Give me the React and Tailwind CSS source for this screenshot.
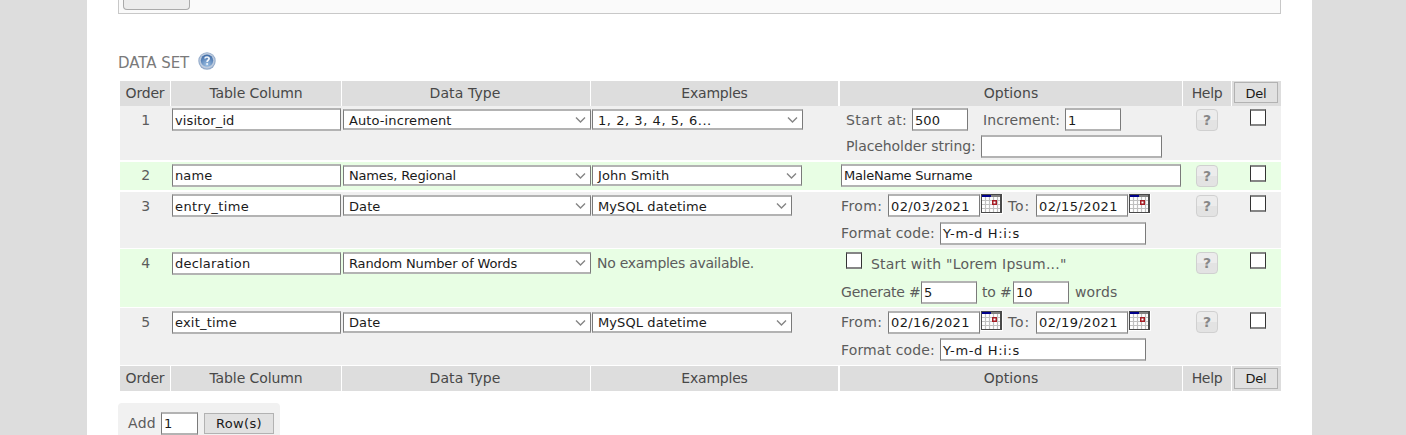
import React from "react";

function Field({ value = "", tracking = "tracking-[0.1px]", leading = "leading-[20px]", className = "" }) {
  return (
    <div className={`h-[23px] shrink-0 border-x border-y-2 border-x-[#7a7a7a] border-y-[#b3b3b3] bg-white pl-[2px] text-[13px] whitespace-nowrap text-[#1a1a1a] ${leading} ${tracking} ${className}`}>
      {value}
    </div>
  );
}

function Select({ value, tracking = "tracking-[0.1px]", shift = "top-0", className = "" }) {
  return (
    <div className={`flex shrink-0 items-center justify-between border-x border-y-2 border-x-[#7a7a7a] border-y-[#b3b3b3] bg-white pr-[4px] pl-[5px] text-[13px] leading-[17px] whitespace-nowrap text-[#1a1a1a] ${tracking} ${className}`}>
      <span className={`relative ${shift}`}>{value}</span>
      <svg width="11" height="8" viewBox="0 0 11 8" fill="none" stroke="#858585" strokeWidth="1.4">
        <path d="M1 1.5L5.5 6L10 1.5" />
      </svg>
    </div>
  );
}

function Label({ children, leading = "leading-[23px]", className = "" }) {
  return <span className={`h-[23px] shrink-0 whitespace-nowrap ${leading} ${className}`}>{children}</span>;
}

function Check({ className = "" }) {
  return <div className={`h-[17px] w-[16px] shrink-0 border-x border-y-2 border-x-[#333] border-y-[#858585] bg-white ${className}`} />;
}

function Calendar() {
  return (
    <svg className="ml-[1px] shrink-0" width="22" height="20" viewBox="0 0 22 20">
      <rect width="22" height="20" fill="#fff" />
      <rect width="21" height="19" fill="#4a4a4a" />
      <rect x="1" y="1" width="18" height="2" fill="#808080" />
      <rect x="1" y="1" width="9" height="2" fill="#00008b" />
      <rect x="1" y="3" width="18" height="15" fill="#fff" />
      <path d="M4.5 3v15M8.5 3v15M12.5 3v15M16.5 3v15M1 6.5h18M1 10.5h18M1 14.5h18" stroke="#c0c0c0" strokeWidth="1.2" />
      <rect x="11" y="6" width="5" height="5" fill="#a51c24" />
      <rect x="12.5" y="7.5" width="2" height="2" fill="#fff" />
    </svg>
  );
}

function HelpButton({ className = "" }) {
  return (
    <div className={`h-[22px] w-[22px] rounded-[4px] border border-[#d0d0d0] bg-linear-to-b from-[#ececec] from-50% to-[#e3e3e3] to-50% text-center text-[14px] leading-[20px] font-bold text-[#888] ${className}`}>
      ?
    </div>
  );
}

function Button({ children, className = "" }) {
  return (
    <div className={`h-[21px] border border-[#b2b2b2] bg-[#e1e1e1] text-center text-[13px] text-[#1a1a1a] ${className}`}>
      {children}
    </div>
  );
}

const columns = [
  ["Order", "w-[50px]"],
  ["Table Column", "w-[170px] tracking-[-0.1px]"],
  ["Data Type", "w-[248px] tracking-[0.1px] pr-[2px]"],
  ["Examples", "w-[247px] mr-[1px]"],
  ["Options", "w-[342px] tracking-[0.1px]"],
  ["Help", "w-[48px] tracking-[-0.3px]"],
];

function HeaderRow({ buttonClass }) {
  return (
    <div className="flex h-[25px] gap-px text-center leading-[24px] text-[#484848]">
      {columns.map(([label, width]) => (
        <div key={label} className={`shrink-0 bg-[#ddd] ${width}`}>{label}</div>
      ))}
      <div className="w-[49px] shrink-0 bg-[#ddd]">
        <Button className={`ml-[2px] w-[44px] ${buttonClass}`}>Del</Button>
      </div>
    </div>
  );
}

function Row({ order, name, nameTracking, nameLeading, type, typeTracking, typeShift, selectClass = "mt-[1px] h-[21px]", example, exampleTracking, exampleClass, rowClass, orderLeading = "leading-[24px]", checkClass = "mt-[1px]", helpClass = "mt-[1px]", children }) {
  return (
    <div className={`flex ${rowClass}`}>
      <div className={`w-[51px] shrink-0 text-center ${orderLeading}`}>{order}</div>
      <div className="w-[171px] shrink-0 pl-[1px]">
        <Field value={name} tracking={nameTracking} leading={nameLeading} className="w-[169px]" />
      </div>
      <div className="w-[249px] shrink-0 pl-[1px]">
        <Select value={type} tracking={typeTracking} shift={typeShift} className={`w-[248px] ${selectClass}`} />
      </div>
      <div className="w-[249px] shrink-0 pl-[1px]">
        {example ? (
          <Select value={example} tracking={exampleTracking} shift={typeShift} className={`${selectClass} ${exampleClass}`} />
        ) : (
          <Label className="block pl-[5px] tracking-[-0.28px]">No examples available.</Label>
        )}
      </div>
      <div className="w-[343px] shrink-0 pl-[1px]">{children}</div>
      <div className="w-[49px] shrink-0 pl-[13px]">
        <HelpButton className={helpClass} />
      </div>
      <div className="w-[49px] shrink-0 pl-[18px]">
        <Check className={checkClass} />
      </div>
    </div>
  );
}

function DateOptions({ from, to, dateLeading, labelLeading, codeLeading, lineClass }) {
  return (
    <>
      <div className="flex">
        <Label leading={labelLeading} className="w-[47px] tracking-[0.4px]">From:</Label>
        <Field value={from} tracking="tracking-[0.4px]" leading={dateLeading} className="w-[92px]" />
        <Calendar />
        <Label leading={labelLeading} className="ml-[5px] w-[28px] tracking-[0.9px]">To:</Label>
        <Field value={to} tracking="tracking-[0.4px]" leading={dateLeading} className="w-[92px]" />
        <Calendar />
      </div>
      <div className={`flex ${lineClass}`}>
        <Label leading={codeLeading} className="w-[99px] tracking-[0.13px]">Format code:</Label>
        <Field value="Y-m-d H:i:s" leading={codeLeading ? "leading-[22px]" : undefined} tracking="tracking-[0.65px]" className="w-[206px]" />
      </div>
    </>
  );
}

function HelpIcon() {
  return (
    <svg className="mt-[8px] ml-[9px]" width="18" height="18" viewBox="0 0 18 18">
      <defs>
        <radialGradient id="ball" cx="50%" cy="85%" r="80%">
          <stop offset="0" stopColor="#9cc0e4" />
          <stop offset="1" stopColor="#416da8" />
        </radialGradient>
      </defs>
      <circle cx="9" cy="9" r="8.7" fill="#93abcb" />
      <circle cx="9" cy="8.8" r="7.7" fill="#bccadd" />
      <circle cx="9" cy="8.6" r="6.2" fill="url(#ball)" />
      <path d="M6.9 6.5C7.1 4.5 11.1 4.4 11.1 6.8C11.1 8.3 9.1 8.3 9.1 9.9" fill="none" stroke="#f0f5fb" strokeWidth="1.7" />
      <circle cx="9.1" cy="12" r="1" fill="#f0f5fb" />
    </svg>
  );
}

export default function App() {
  return (
    <div className="h-[435px] w-[1406px] overflow-hidden bg-[#ddd] pl-[87px] font-['DejaVu_Sans',sans-serif] text-[14px] tracking-[-0.2px] text-[#5c5c5c]">
      <div className="h-full w-[1225px] bg-white pl-[31px]">
        <div className="h-[14px] w-[1163px] border-x border-b border-[#c8c8c8] bg-[#fafafa] pl-[4px]">
          <div className="h-[10px] w-[67px] rounded-b-[4px] border border-t-0 border-[#aaa] bg-[#ececec]" />
        </div>

        <div className="flex h-[67px] pt-[30px]">
          <div className="mt-[9px] w-[71px] text-[15px] leading-[20px] tracking-[-0.05px] whitespace-nowrap text-[#7a7a7a]">DATA SET</div>
          <HelpIcon />
        </div>

        <div className="ml-[2px] w-[1161px]">
          <HeaderRow buttonClass="mt-[1px] leading-[21px]" />

          <Row order="1" name="visitor_id" nameLeading="leading-[21px]" type="Auto-increment" typeShift="top-[1px]" example="1, 2, 3, 4, 5, 6..." exampleTracking="tracking-[0.55px]" exampleClass="w-[211px]" rowClass="h-[54px] bg-[#f0f0f0] pt-[2px]">
            <div className="flex pl-[5px]">
              <Label leading="leading-[24px]" className="w-[66px] tracking-[0.42px]">Start at:</Label>
              <Field value="500" leading="leading-[21px]" className="w-[56px]" />
              <Label leading="leading-[24px]" className="ml-[15px] w-[82px] tracking-[0.1px]">Increment:</Label>
              <Field value="1" leading="leading-[21px]" className="w-[56px]" />
            </div>
            <div className="mt-[4px] flex pl-[5px]">
              <Label className="w-[135px] tracking-[-0.08px]">Placeholder string:</Label>
              <Field className="w-[181px]" />
            </div>
          </Row>

          <Row order="2" orderLeading="leading-[23px]" name="name" type="Names, Regional" typeTracking="tracking-[-0.16px]" example="John Smith" exampleClass="w-[210px]" rowClass="mt-[2px] h-[28px] bg-[#e8fee4] pt-[2px]">
            <Field value="MaleName Surname" tracking="tracking-[-0.22px]" className="w-[340px]" />
          </Row>

          <Row order="3" name="entry_time" nameTracking="tracking-[0.4px]" nameLeading="leading-[22px]" type="Date" typeShift="top-[1px]" example="MySQL datetime" exampleClass="w-[200px]" rowClass="mt-[2px] h-[56px] bg-[#f0f0f0] pt-[2px]">
            <DateOptions from="02/03/2021" to="02/15/2021" dateLeading="leading-[22px]" labelLeading="leading-[25px]" lineClass="mt-[5px]" />
          </Row>

          <Row order="4" orderLeading="leading-[23px]" name="declaration" nameTracking="tracking-[0.2px]" type="Random Number of Words" typeTracking="tracking-[-0.14px]" selectClass="h-[22px]" rowClass="mt-px h-[58px] bg-[#e8fee4] pt-[3px]" checkClass="" helpClass="">
            <div className="flex pl-[5px]">
              <Check />
              <Label leading="leading-[25px]" className="ml-[9px] tracking-[0.2px]">Start with "Lorem Ipsum..."</Label>
            </div>
            <div className="mt-[6px] flex">
              <Label className="w-[80px]">Generate #</Label>
              <Field value="5" className="w-[56px]" />
              <Label className="ml-[5px] w-[31px]">to #</Label>
              <Field value="10" className="w-[56px]" />
              <Label className="ml-[6px] tracking-[0.15px]">words</Label>
            </div>
          </Row>

          <Row order="5" orderLeading="leading-[23px]" name="exit_time" nameTracking="tracking-[0.2px]" type="Date" example="MySQL datetime" exampleClass="w-[200px]" rowClass="mt-px h-[57px] bg-[#f0f0f0] pt-[3px]" helpClass="">
            <DateOptions from="02/16/2021" to="02/19/2021" codeLeading="leading-[25px]" lineClass="mt-[4px]" />
          </Row>

          <div className="mt-px">
            <HeaderRow buttonClass="mt-[2px] leading-[19px]" />
          </div>
        </div>

        <div className="mt-[12px] flex h-[36px] w-[162px] rounded-t-[4px] bg-[#f1f1f1] pt-[9px] pl-[10px]">
          <Label className="w-[33px] tracking-[0.3px]">Add</Label>
          <Field value="1" className="w-[37px]" />
          <Button className="mt-[1px] ml-[6px] w-[70px] leading-[19px] tracking-[0.3px]">Row(s)</Button>
        </div>
      </div>
    </div>
  );
}
